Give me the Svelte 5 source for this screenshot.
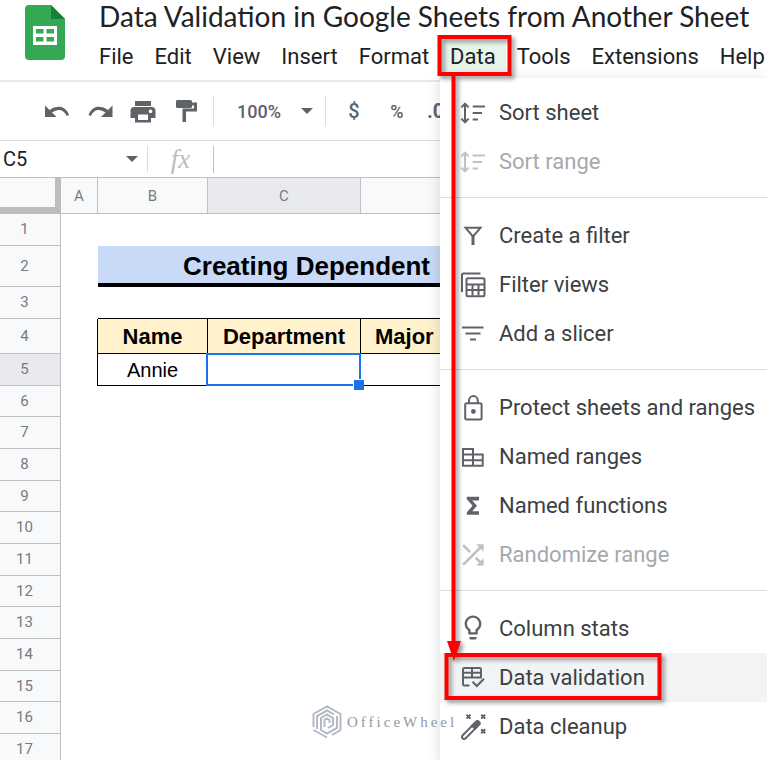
<script lang="ts">
  const menus = ['File', 'Edit', 'View', 'Insert', 'Format', 'Data', 'Tools', 'Extensions', 'Help']

  const groups = [
    [
      { icon: 'sort', label: 'Sort sheet' },
      { icon: 'sort', label: 'Sort range', disabled: true },
    ],
    [
      { icon: 'filter', label: 'Create a filter' },
      { icon: 'views', label: 'Filter views' },
      { icon: 'slicer', label: 'Add a slicer' },
    ],
    [
      { icon: 'lock', label: 'Protect sheets and ranges' },
      { icon: 'ranges', label: 'Named ranges' },
      { icon: 'sigma', label: 'Named functions' },
      { icon: 'shuffle', label: 'Randomize range', disabled: true },
    ],
    [
      { icon: 'bulb', label: 'Column stats' },
      { icon: 'validation', label: 'Data validation' },
      { icon: 'wand', label: 'Data cleanup' },
    ],
  ]

  const emptyRows = Array.from({ length: 12 }, (_, i) => i + 6)

  let openMenu = $state('Data')
  let hovered = $state('Data validation')
  let cellRef = $state('C5')
</script>

{#snippet icon(name: string)}
  <svg class="icon" viewBox="0 0 24 24" aria-hidden="true">
    {#if name === 'sort'}
      <path class="line" d="M4 3v18M0.4 6.4 4 2.6 7.6 6.4M0.4 17.6 4 21.4 7.6 17.6M11.7 5.5H24M11.7 12H21M11.7 18.5H17" />
    {:else if name === 'filter'}
      <path class="line" d="M4.5 3.8H19.5L12 12.5Z" />
      <path class="line thick" d="M12 12V21" />
    {:else if name === 'views'}
      <path class="line" d="M1 19V2Q1 0.5 2.5 0.5H19.5" />
      <rect class="line" x="5.5" y="5.2" width="18" height="18" rx="1.5" />
      <path class="line" d="M5.5 11.5h18M5.5 17h18M11.5 11.5v11M17.5 11.5v11" />
    {:else if name === 'slicer'}
      <path class="line" d="M1 5.5H22.5M4.5 11.5H19.5M9 17.5H15" />
    {:else if name === 'lock'}
      <rect class="line" x="4.2" y="7.2" width="16.4" height="16.2" rx="1.5" />
      <path class="line" d="M8 7V4.5a4.4 4.4 0 0 1 8.8 0V7" />
      <circle cx="12.4" cy="15.5" r="2.4" />
    {:else if name === 'ranges'}
      <path class="line" d="M2 4H12V9.5H21.7V20.7H2ZM2 9.5H12M2 15.2H21.7M12 9.5V20.7" />
    {:else if name === 'sigma'}
      <path d="M18 2.8H5.8V5.3L11.6 11.8 5.8 18.3V20.8H18V17.2H11.2L16 11.8 11.2 6.4H18Z" />
    {:else if name === 'shuffle'}
      <path transform="translate(-4 -4) scale(1.33)" d="M10.59 9.17 5.41 4 4 5.41l5.17 5.17zM14.5 4l2.04 2.04L4 18.59 5.41 20 17.96 7.46 20 9.5V4zM14.83 13.41l-1.41 1.41 3.13 3.13L14.5 20H20v-5.5l-2.04 2.04z" />
    {:else if name === 'bulb'}
      <path transform="translate(-2.4 -4) scale(1.2)" d="M9 21c0 .55.45 1 1 1h4c.55 0 1-.45 1-1v-1H9zM12 2C8.14 2 5 5.14 5 9c0 2.38 1.19 4.47 3 5.74V17c0 .55.45 1 1 1h6c.55 0 1-.45 1-1v-2.26c1.81-1.27 3-3.36 3-5.74 0-3.86-3.14-7-7-7zm2.85 11.1-.85.6V16h-4v-2.3l-.85-.6C7.8 12.16 7 10.63 7 9c0-2.76 2.24-5 5-5s5 2.24 5 5c0 1.63-.8 3.16-2.15 4.1z" />
    {:else if name === 'validation'}
      <path class="line" d="M8.5 19.5H3.5Q2 19.5 2 18V3.5Q2 2 3.5 2H18.5Q20 2 20 3.5V11.5H2M2 6.7H20M11 2V11.5" />
      <path class="line" d="M11.5 15.7l4.3 4.3 7.2-7.2" />
    {:else if name === 'wand'}
      <path class="line" d="M1.3 20.7 14.2 7.6 17.2 10.6 4.2 23.7Q2.7 24.5 1.5 23.3 0.4 22 1.3 20.7Z" />
      <path d="M9.5 10.8 15.2 5.2q1.2-1 2.4 0l1.8 1.8q1 1.2 0 2.4L14 15Z" />
      <path class="line" d="M5.5 -0.4l4 4M9.5 -0.4l-4 4M20.2 -0.4l4 4M24.2 -0.4l-4 4M20.2 14.2l4 4M24.2 14.2l-4 4" />
    {/if}
  </svg>
{/snippet}

<div class="app">
  <header>
    <svg class="logo" viewBox="0 0 40 55" aria-label="Sheets">
      <path fill="#34a853" d="M4 0H26L40 14V51a4 4 0 0 1-4 4H4a4 4 0 0 1-4-4V4a4 4 0 0 1 4-4Z" />
      <path fill="#188038" d="M26 0 40 14H26Z" />
      <path fill="#fff" fill-rule="evenodd" d="M8 21H32V40H8ZM11 24V28.5H18.5V24ZM21.5 24V28.5H29V24ZM11 32V36.5H18.5V32ZM21.5 32V36.5H29V32Z" />
    </svg>
    <div class="heading">
      <h1>Data Validation in Google Sheets from Another Sheet</h1>
      <nav>
        {#each menus as name}
          <button class:open={openMenu === name} onclick={() => (openMenu = name)}>{name}</button>
        {/each}
      </nav>
    </div>
  </header>

  <div class="toolbar">
    <button aria-label="Undo">
      <svg viewBox="0 0 26 26"><path d="M1 7.5V19H12.5L8 14.6Q12 11.4 16 12 20.5 13 22.6 18L25 17Q22.5 10 16.5 8.8 10.5 7.9 5.5 12Z" /></svg>
    </button>
    <button aria-label="Redo">
      <svg viewBox="0 0 26 26"><path d="M25.5 7.5V19H14L18.5 14.6Q14.5 11.4 10.5 12 6 13 3.9 18L1.5 17Q4 10 10 8.8 16 7.9 21 12Z" /></svg>
    </button>
    <button aria-label="Print">
      <svg viewBox="0 0 26 26"><path fill-rule="evenodd" d="M5 3H21V8H5ZM4.5 9H21.5Q25.5 9 25.5 13V20H21V24.5H5V20H0.5V13Q0.5 9 4.5 9ZM8 16.5V22H18V16.5ZM20.5 11.5a1.8 1.8 0 1 0 0.1 0Z" /></svg>
    </button>
    <button aria-label="Paint format">
      <svg viewBox="0 0 26 26"><path d="M4 2H17.5Q19 2 19 3.5V4.5H24V13.5H13V24H9.5V10.5H21V7.5H19V8.5Q19 10 17.5 10H4.5Q3 10 3 8.5V3.5Q3 2 4 2Z" /></svg>
    </button>
    <span class="divider"></span>
    <button class="zoom">100% <span class="caret"></span></button>
    <span class="divider"></span>
    <div class="formats">
      <button class="bold">$</button>
      <button>%</button>
      <button class="bold decimal">.0</button>
    </div>
  </div>

  <div class="formula">
    <label class="namebox">
      <input aria-label="Name box" bind:value={cellRef} />
      <span class="caret"></span>
    </label>
    <span class="fx">fx</span>
    <input class="value" aria-label="Formula" />
  </div>

  <table>
    <colgroup>
      <col class="col-head" /><col class="col-a" /><col class="col-b" /><col class="col-c" /><col />
    </colgroup>
    <thead>
      <tr><th class="corner"></th><th>A</th><th>B</th><th class="current">C</th><th></th></tr>
    </thead>
    <tbody>
      <tr><th>1</th><td></td><td></td><td></td><td></td></tr>
      <tr class="banner"><th>2</th><td></td><td class="title" colspan="3">Creating Dependent</td></tr>
      <tr class="above"><th>3</th><td></td><td></td><td></td><td></td></tr>
      <tr class="boxed fields">
        <th>4</th><td></td><td>Name</td><td>Department</td><td class="major">Major</td>
      </tr>
      <tr class="boxed">
        <th class="current">5</th><td></td><td>Annie</td><td class="selected"><span class="selection"></span></td><td></td>
      </tr>
      {#each emptyRows as n}
        <tr><th>{n}</th><td></td><td></td><td></td><td></td></tr>
      {/each}
    </tbody>
  </table>

  <div class="menu" role="menu">
    {#each groups as group, i}
      {#if i > 0}<hr />{/if}
      {#each group as item}
        <button
          role="menuitem"
          class:hover={hovered === item.label}
          disabled={item.disabled}
          onmouseenter={() => (hovered = item.label)}
        >
          {@render icon(item.icon)}
          {item.label}
        </button>
      {/each}
    {/each}
  </div>

  <div class="watermark">
    <svg viewBox="0 0 30 34" aria-hidden="true">
      <path d="M1.5 22V9L15 1.5 28.5 9V25L20 30M5 24V11L15 5.5 22 9.5M25 11V23L15 28.5 9 25V13L15 9.5 21 13V20L16 23M12.5 22V15L15 13.5 17.5 15V18M1.5 25 15 32.5" />
    </svg>
    OfficeWheel
  </div>

  <!-- callouts pointing from the Data menu to Data validation -->
  <svg class="callouts" width="767" height="760" aria-hidden="true">
    <rect x="439.5" y="37" width="70" height="37" />
    <path d="M453.5 75V645" />
    <rect x="446.5" y="655" width="213" height="43" />
    <path class="head" d="M447 641H461L454 661Z" />
  </svg>
</div>

<style>
  :global(body) { margin: 0; overflow: hidden; }
  .app {
    position: relative;
    height: 100vh;
    overflow: hidden;
    background: #fff;
    color: #202124;
    font-family: Roboto, sans-serif;
  }
  button { padding: 0; border: 0; background: none; font: inherit; color: inherit; white-space: nowrap; }
  input { padding: 0; border: 0; outline: 0; background: none; font: inherit; color: inherit; min-width: 0; }

  header { display: flex; height: 80px; border-bottom: 2px solid #e8e8e8; }
  .logo { flex: none; width: 40px; height: 55px; margin: 5px 23px 0 25px; }
  h1 {
    margin: 0;
    padding-left: 11px;
    font-family: Lato, sans-serif;
    font-size: 28px;
    font-weight: 400;
    line-height: 32px;
    white-space: nowrap;
  }
  nav { display: flex; margin-top: 6px; font-size: 22px; }
  nav button { height: 36px; padding: 0 10px 0 11px; }
  nav .open { background: #e6f4ea; }

  .toolbar {
    display: flex;
    align-items: center;
    gap: 17px;
    height: 58px;
    padding-left: 44px;
    border-bottom: 1px solid #dadce0;
    color: #5f6368;
    font-size: 18px;
    font-weight: 500;
  }
  .toolbar svg { display: block; width: 26px; height: 26px; fill: #5f6368; }
  .divider { width: 1px; height: 30px; margin: 0 6px 0 -3px; background: #dadce0; }
  .zoom { display: flex; align-items: center; gap: 20px; margin-right: -2px; }
  .caret {
    border: 6px solid transparent;
    border-top-color: #5f6368;
    border-bottom: 0;
  }
  .formats { display: flex; align-items: center; gap: 17px; margin-left: -8px; }
  .formats button { width: 26px; }
  .formats .bold { font-size: 20px; }
  .formats .decimal { font-weight: 700; text-align: left; }

  .formula { display: flex; align-items: center; height: 36px; border-bottom: 1px solid #c0c0c0; font-size: 20px; }
  .namebox { display: flex; align-items: center; width: 138px; height: 26px; padding-right: 9px; border-right: 1px solid #dadce0; }
  .namebox input { flex: 1; padding-left: 3px; }
  .fx {
    width: 65px;
    border-right: 1px solid #c0c0c0;
    color: #bdbdbd;
    font: italic 27px/27px "Liberation Serif", serif;
    text-align: center;
  }
  .value { flex: 1; }

  table { width: 100%; table-layout: fixed; border-collapse: separate; border-spacing: 0; }
  .col-head { width: 61px; }
  .col-a { width: 37px; }
  .col-b { width: 110px; }
  .col-c { width: 153px; }
  th, td { box-sizing: border-box; height: 32px; padding: 0; line-height: 20px; }
  th {
    border: solid #c0c0c0;
    border-width: 0 1px 1px 0;
    background: #f8f9fa;
    color: #777b80;
    font-size: 15px;
    font-weight: 400;
  }
  thead th { height: 36px; }
  tbody th { padding: 0 11px 1px 0; }
  tbody tr:nth-child(3n + 6) > * { height: 31px; }
  .current { background: #e8eaed; }
  .corner { border-width: 0 6px 7px 0; border-color: #bdbdbd; }
  .banner th { height: 41px; }
  tbody .title {
    padding: 3px 0 0 85px;
    border-bottom: 4px solid #000;
    background: #c9daf8;
    color: #000;
    font: bold 26px "Liberation Sans", sans-serif;
  }
  tbody .above > * { height: 32px; }
  .above td:nth-child(n + 3) { border-bottom: 1px solid #000; }
  .boxed td {
    padding-top: 2px;
    border: solid #000;
    border-width: 0 1px 1px 0;
    color: #000;
    font: 20px "Liberation Sans", sans-serif;
    text-align: center;
  }
  .boxed td:nth-child(2) { border-bottom: 0; }
  .fields td { height: 35px; font-size: 22px; font-weight: 700; }
  .fields td:nth-child(n + 3) { background: #fff2cc; }
  .fields .major { padding-left: 14px; text-align: left; }
  .selected { position: relative; }
  .selection { position: absolute; inset: -1px -1px -1px -2px; border: 2px solid #1a73e8; }
  .selection::after {
    content: "";
    position: absolute;
    right: -5px;
    bottom: -6px;
    width: 10px;
    height: 10px;
    border: solid #fff;
    border-width: 1px 0 0 1px;
    background: #1a73e8;
  }

  .menu {
    position: absolute;
    top: 78px;
    right: 0;
    bottom: 0;
    left: 440px;
    display: flex;
    flex-direction: column;
    padding-top: 10px;
    background: #fff;
    box-shadow: 0 3px 12px 1px rgba(60, 64, 67, 0.18);
    font-size: 22px;
  }
  .menu button {
    display: flex;
    flex: none;
    align-items: center;
    gap: 14px;
    height: 49px;
    padding-left: 21px;
    color: #3c4043;
    text-align: left;
  }
  .menu .hover { background: #f1f3f4; }
  .menu button:disabled { color: #a5a9ae; }
  .menu hr { flex: none; width: 100%; height: 1px; margin: 11px 0 13px; border: 0; background: #dadce0; }
  .icon { flex: none; width: 24px; height: 24px; overflow: visible; fill: #5f6368; }
  .line { fill: none; stroke: #5f6368; stroke-width: 2; }
  .thick { stroke-width: 3; }
  button:disabled .icon { opacity: 0.4; }

  .watermark {
    position: absolute;
    top: 705px;
    left: 312px;
    display: flex;
    align-items: center;
    gap: 5px;
    color: #9298a8;
    font: 15px "Liberation Serif", serif;
    letter-spacing: 3px;
  }
  .watermark svg { width: 30px; height: 34px; fill: none; stroke: #b4b9c6; stroke-width: 2; }

  .callouts {
    position: absolute;
    top: 0;
    left: 0;
    fill: none;
    stroke: #f00;
    stroke-width: 4;
    filter: drop-shadow(3px 3px 2px rgba(0, 0, 0, 0.4));
    pointer-events: none;
  }
  .head { fill: #f00; stroke: none; }
</style>
